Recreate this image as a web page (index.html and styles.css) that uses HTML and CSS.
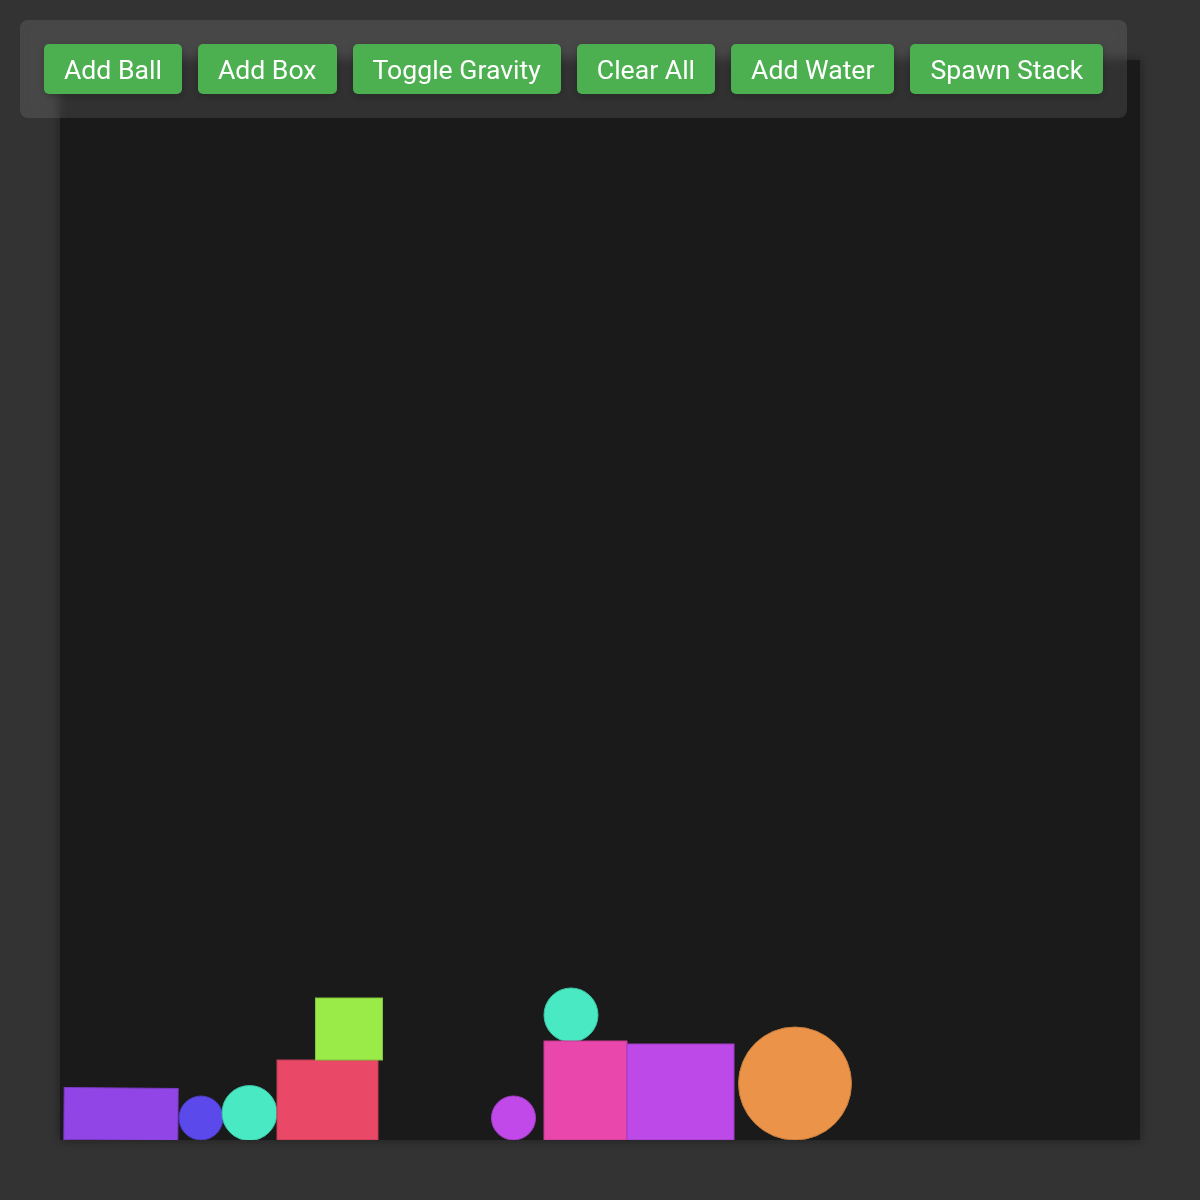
FILE: index.html
```html
<!DOCTYPE html>
<html lang="en">
<head>
    <meta charset="UTF-8">
    <meta name="viewport" content="width=device-width, initial-scale=1.0">
    <title>Physics Sandbox</title>
    <link rel="stylesheet" href="styles.css">
</head>
<body>
    <div class="controls">
        <button class="btn">Add Ball</button>
        <button class="btn">Add Box</button>
        <button class="btn">Toggle Gravity</button>
        <button class="btn">Clear All</button>
        <button class="btn">Add Water</button>
        <button class="btn">Spawn Stack</button>
    </div>

    <!-- world is 1080 x 1080, floor at y = 1080 -->
    <svg class="world" width="1080" height="1080" viewBox="0 0 1080 1080">
        <rect x="4" y="1028" width="114" height="52" fill="#9245e6" stroke="#7a38c4" transform="rotate(0.4 61 1054)"/>
        <circle cx="141" cy="1058" r="22" fill="#5b49eb" stroke="#4a3bc4"/>
        <circle cx="189.5" cy="1053" r="27.5" fill="#49e9c3" stroke="#3cc4a3"/>
        <rect x="217" y="1000" width="101" height="80" fill="#e94866" stroke="#c43b55"/>
        <rect x="255.5" y="938" width="67" height="62" fill="#9aeb47" stroke="#82c43b"/>
        <circle cx="453.5" cy="1058" r="22" fill="#c149e9" stroke="#a23cc4"/>
        <circle cx="511" cy="955" r="27" fill="#49e9c3" stroke="#3cc4a3"/>
        <rect x="484" y="981" width="83" height="99" fill="#e947ab" stroke="#c43b8f"/>
        <rect x="567" y="984" width="107" height="96" fill="#bd49e9" stroke="#9f3cc4"/>
        <circle cx="735" cy="1023.5" r="56.5" fill="#eb9449" stroke="#c47b3c"/>
    </svg>
</body>
</html>
```

FILE: styles.css
```css
* {
    margin: 0;
    padding: 0;
    box-sizing: border-box;
}

body {
    background-color: #333;
    padding: 60px;
    font-family: Roboto, 'Liberation Sans', Arial, sans-serif;
    min-height: 100vh;
}

.world {
    display: block;
    background-color: #1a1a1a;
    box-shadow: 0 0 10px rgba(0, 0, 0, 0.4);
}

.controls {
    position: absolute;
    top: 20px;
    left: 20px;
    display: flex;
    gap: 16px;
    padding: 24px;
    background-color: rgba(255, 255, 255, 0.1);
    border-radius: 8px;
    backdrop-filter: blur(4px);
    z-index: 2;
}

.btn {
    height: 50px;
    padding: 0 20px;
    background-color: #4caf50;
    color: white;
    border: none;
    border-radius: 5px;
    font-family: inherit;
    font-size: 26.6px;
    cursor: pointer;
    box-shadow: 0 2px 6px rgba(0, 0, 0, 0.2);
}

.btn:hover {
    background-color: #45a049;
}
```
